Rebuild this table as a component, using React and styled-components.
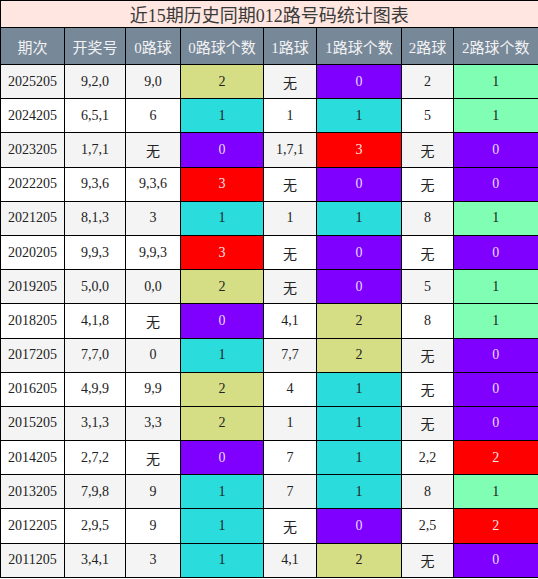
import styled, { createGlobalStyle } from 'styled-components';

const GlobalStyle = createGlobalStyle`
    body {
        margin: 0;
        background: #fff;
        font-family: "Liberation Serif", "Noto Sans CJK SC", serif;
    }
`;

const tones = {
    y: { bg: '#d5de85', fg: '#222' },
    c: { bg: '#2adcdc', fg: '#222' },
    p: { bg: '#8000ff', fg: '#e6dcff' },
    r: { bg: '#ff0000', fg: '#ffe6e6' },
    g: { bg: '#80ffb4', fg: '#222' },
};

const headers = ['期次', '开奖号', '0路球', '0路球个数', '1路球', '1路球个数', '2路球', '2路球个数'];
const widths = [64, 61, 55, 83, 53, 85, 52, 85];

const rows = [
    ['2025205', '9,2,0', '9,0', '2y', '无', '0p', '2', '1g'],
    ['2024205', '6,5,1', '6', '1c', '1', '1c', '5', '1g'],
    ['2023205', '1,7,1', '无', '0p', '1,7,1', '3r', '无', '0p'],
    ['2022205', '9,3,6', '9,3,6', '3r', '无', '0p', '无', '0p'],
    ['2021205', '8,1,3', '3', '1c', '1', '1c', '8', '1g'],
    ['2020205', '9,9,3', '9,9,3', '3r', '无', '0p', '无', '0p'],
    ['2019205', '5,0,0', '0,0', '2y', '无', '0p', '5', '1g'],
    ['2018205', '4,1,8', '无', '0p', '4,1', '2y', '8', '1g'],
    ['2017205', '7,7,0', '0', '1c', '7,7', '2y', '无', '0p'],
    ['2016205', '4,9,9', '9,9', '2y', '4', '1c', '无', '0p'],
    ['2015205', '3,1,3', '3,3', '2y', '1', '1c', '无', '0p'],
    ['2014205', '2,7,2', '无', '0p', '7', '1c', '2,2', '2r'],
    ['2013205', '7,9,8', '9', '1c', '7', '1c', '8', '1g'],
    ['2012205', '2,9,5', '9', '1c', '无', '0p', '2,5', '2r'],
    ['2011205', '3,4,1', '3', '1c', '4,1', '2y', '无', '0p'],
];

const App = () => {
    return (
        <>
        <GlobalStyle />
        <Table>
            <colgroup>
                {widths.map((w, i) => <col key={i} style={{ width: w }} />)}
            </colgroup>
            <thead>
                <tr>
                    <Title colSpan={8}>近15期历史同期012路号码统计图表</Title>
                </tr>
                <tr>
                    {headers.map(h => <Head key={h}>{h}</Head>)}
                </tr>
            </thead>
            <tbody>
                {rows.map((r, i) => (
                    <Row key={r[0]} $odd={i % 2 === 0}>
                        {r.map((c, j) => {
                            if (j === 3 || j === 5 || j === 7) {
                                return <Cell key={j} $tone={c[1]}>{c[0]}</Cell>;
                            }
                            return <Cell key={j}>{c}</Cell>;
                        })}
                    </Row>
                ))}
            </tbody>
        </Table>
        </>
    );
}

const Table = styled.table`
    width: 538px;
    table-layout: fixed;
    border-collapse: collapse;
    border: 1px solid #000;
    border-right-width: 2px;
`;

const Title = styled.th`
    height: 26px;
    padding: 0;
    background: #ffe6e0;
    color: #3a3a3a;
    font-size: 18px;
    font-weight: normal;
    text-align: center;
    border: 1px solid #000;
`;

const Head = styled.th`
    height: 36px;
    padding: 0;
    background: #778899;
    color: #f2f2f2;
    font-size: 15px;
    font-weight: normal;
    text-align: center;
    border: 1px solid #000;
    white-space: nowrap;
`;

const Row = styled.tr`
    background: ${props => props.$odd ? '#f4f4f4' : '#fff'};
`;

const Cell = styled.td`
    height: 33.2px;
    padding: 0;
    text-align: center;
    font-size: 14px;
    border: 1px solid #000;
    background: ${props => props.$tone ? tones[props.$tone].bg : 'transparent'};
    color: ${props => props.$tone ? tones[props.$tone].fg : '#222'};
`;

export default App;
